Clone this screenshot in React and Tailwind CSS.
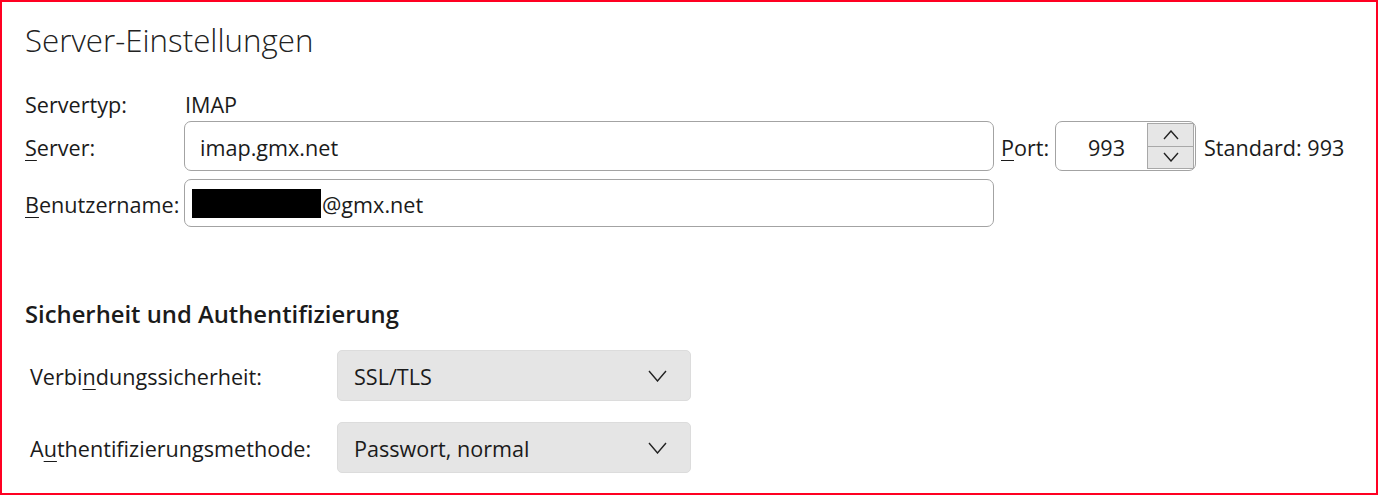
const font = { fontFamily: '"Open Sans", "Noto Sans", sans-serif' }

function Chevron({ up = false, w = 19, h = 10 }) {
  return (
    <svg width={w} height={h + 2} viewBox={`0 0 ${w} ${h + 2}`} fill="none" className="text-[#222]">
      <path
        d={up ? `M1 ${h + 1} L${w / 2} 1 L${w - 1} ${h + 1}` : `M1 1 L${w / 2} ${h + 1} L${w - 1} 1`}
        stroke="currentColor"
        strokeWidth="1.4"
        strokeLinejoin="miter"
      />
    </svg>
  )
}

function Label({ u, rest, pre = '', className = '' }) {
  return (
    <span className={'pt-[4px] ' + className}>
      {pre}
      <span className="underline underline-offset-[4px] decoration-1">{u}</span>
      {rest}
    </span>
  )
}

function Select({ value }) {
  return (
    <div className="w-[354px] h-[51px] rounded-[5px] bg-[#e5e5e5] border border-[#dcdcdc] flex items-center justify-between pl-4 pr-[23px]">
      <span className="pt-[4px]">{value}</span>
      <Chevron w={19} h={10} />
    </div>
  )
}

export default function App() {
  return (
    <div className="w-[1379px] h-[495px] bg-white text-[#1b1b1b] text-[21.6px]" style={font}>
      <div className="w-[1378px] h-[495px] border-2 border-[#ff0022] pl-[23px] pt-[16px]">
        <h1 className="text-[31.3px] font-light leading-[44px] text-[#222]">Server-Einstellungen</h1>

        <div className="mt-[31px] flex items-center h-[24px]">
          <span className="w-[160px]">Servertyp:</span>
          <span>IMAP</span>
        </div>

        <div className="mt-[4px] flex items-center">
          <Label u="S" rest="erver:" className="w-[159px]" />
          <div className="w-[810px] h-[50px] rounded-[7px] border border-[#a3a3a3] flex items-center px-[15px]">
            <span className="pt-[4px]">imap.gmx.net</span>
          </div>
          <Label u="P" rest="ort:" className="ml-[7px] w-[54px]" />
          <div className="w-[141px] h-[50px] rounded-[7px] border border-[#a3a3a3] flex items-center pl-[32px] pr-[1px]">
            <span className="flex-1 pt-[4px]">993</span>
            <div className="w-[47px] h-[46px] border border-[#a8a8a8] bg-[#e6e6e6] flex flex-col">
              <div className="flex-1 flex items-center justify-center border-b border-[#a8a8a8]">
                <Chevron up w={16} h={8} />
              </div>
              <div className="flex-1 flex items-center justify-center">
                <Chevron w={16} h={8} />
              </div>
            </div>
          </div>
          <span className="ml-[8px] pt-[4px]">Standard: 993</span>
        </div>

        <div className="mt-[8px] flex items-center">
          <Label u="B" rest="enutzername:" className="w-[159px]" />
          <div className="w-[810px] h-[48px] rounded-[7px] border border-[#a3a3a3] flex items-center pl-[7px]">
            <span className="w-[129px] h-[29px] bg-black mr-[1px]" />
            <span className="pt-[4px]">@gmx.net</span>
          </div>
        </div>

        <h2 className="mt-[72px] text-[23.8px] font-semibold leading-[30px]">Sicherheit und Authentifizierung</h2>

        <div className="mt-[21px] ml-[5px] flex flex-col gap-[21px]">
          <div className="flex items-center">
            <Label pre="Verbi" u="n" rest="dungssicherheit:" className="w-[307px]" />
            <Select value="SSL/TLS" />
          </div>
          <div className="flex items-center">
            <Label pre="A" u="u" rest="thentifizierungsmethode:" className="w-[307px]" />
            <Select value="Passwort, normal" />
          </div>
        </div>
      </div>
    </div>
  )
}
